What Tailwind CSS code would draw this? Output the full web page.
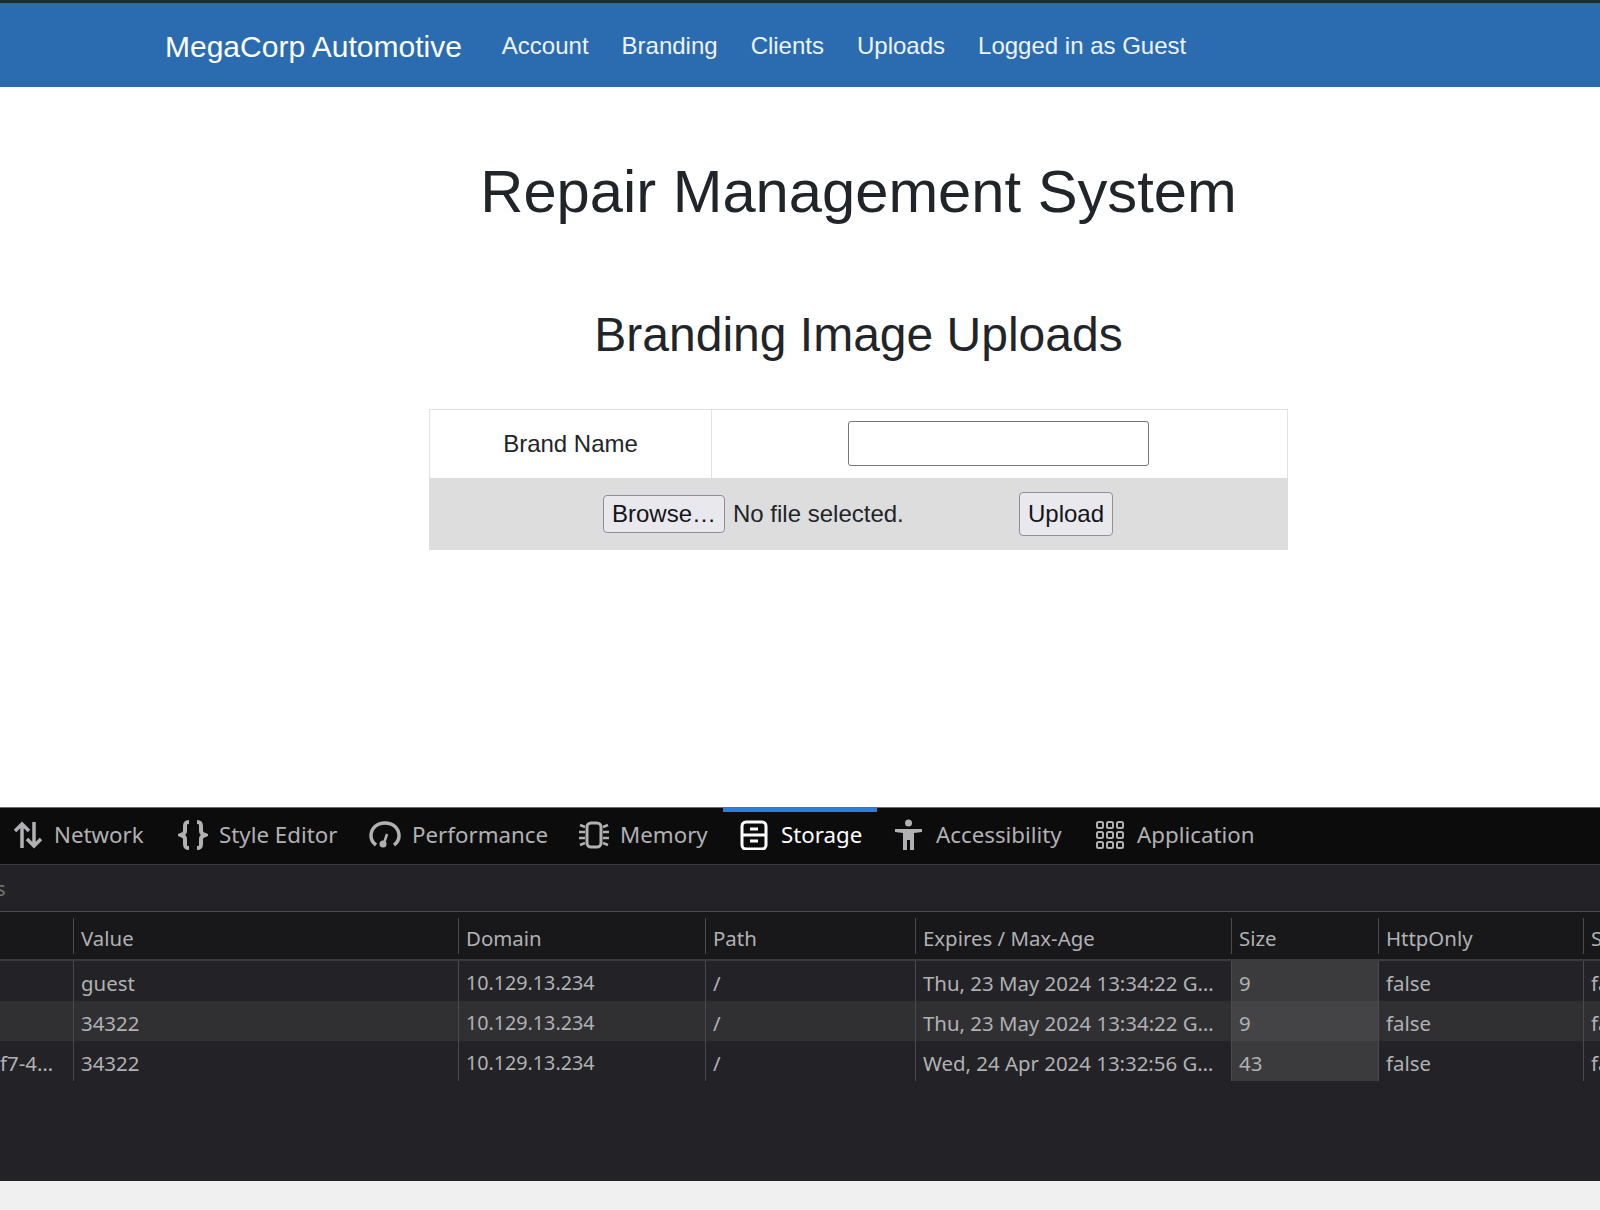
<!DOCTYPE html>
<html lang="en">
<head>
    <meta charset="UTF-8">
    <meta name="viewport" content="width=device-width, initial-scale=1.0">
    <title>Repair Management System</title>
    <script src="https://cdn.jsdelivr.net/npm/@tailwindcss/browser@4"></script>
</head>
<body class="bg-white h-[1210px] overflow-hidden flex flex-col font-['Liberation_Sans',Arial,sans-serif] text-[#212529]">
    <!-- site nav -->
    <nav class="h-[87px] shrink-0 border-t-[3px] border-[#1f2a2e] bg-[#2b6cb0] text-white flex items-center pl-[165px] pt-[2px]">
        <a class="text-[30px] mr-[40px]">MegaCorp Automotive</a>
        <div class="flex gap-[33px] text-[24px] text-[#eef3f9]">
            <a>Account</a>
            <a>Branding</a>
            <a>Clients</a>
            <a>Uploads</a>
            <a>Logged in as Guest</a>
        </div>
    </nav>

    <main class="h-[720px] shrink-0 flex flex-col items-center pl-[117px]">
        <h1 class="text-[59.7px] leading-[72px] mt-[69px]">Repair Management System</h1>
        <h2 class="text-[48px] leading-[56px] mt-[79px]">Branding Image Uploads</h2>
        <div class="w-[859px] mt-[46px] text-[24px]">
            <div class="h-[69px] flex border border-b-0 border-[#dee2e6]">
                <div class="w-[282px] border-r border-[#dee2e6] flex items-center justify-center">Brand Name</div>
                <div class="flex-1 flex items-center pl-[136px] pb-px">
                    <input type="text" class="w-[301px] h-[45px] bg-white border border-[#767676] rounded-[3px]">
                </div>
            </div>
            <div class="h-[72px] bg-[#dddddd] flex items-center pl-[174px]">
                <button class="w-[122px] h-[38px] bg-[#e9e9ed] border border-[#8f8f9d] rounded-[4px] text-[#15141a]">Browse…</button>
                <span class="ml-[8px] w-[286px]">No file selected.</span>
                <button class="w-[94px] h-[44px] bg-[#e9e9ed] border border-[#8f8f9d] rounded-[4px] text-[#15141a]">Upload</button>
            </div>
        </div>
    </main>

    <!-- devtools -->
    <section class="flex-1 flex flex-col bg-[#232327] border-t border-[#6b6b70] font-['Noto_Sans',sans-serif] text-[#b1b1b3] overflow-hidden">
        <div class="h-[57px] shrink-0 bg-[#0c0c0d] border-b border-[#38383d] flex text-[22.3px]">
            <div class="flex items-center gap-[11px] pl-[13px] w-[178px] pb-[2px]">
                <svg class="w-[30px] h-[30px]" viewBox="0 0 30 30" fill="none" stroke="#b1b1b3" stroke-width="3.5"><path d="M9 28V4M2 11l7-7 7 7M21 2v24M14 19l7 7 7-7"/></svg>
                <span>Network</span>
            </div>
            <div class="flex items-center gap-[11px] w-[191px] pb-[2px]">
                <svg class="w-[30px] h-[30px]" viewBox="0 0 30 30" fill="none" stroke="#b1b1b3" stroke-width="4"><path d="M11 2c-3 0-4 1-4 4v5c0 2-1 3-4 4 3 1 4 2 4 4v5c0 3 1 4 4 4M19 2c3 0 4 1 4 4v5c0 2 1 3 4 4-3 1-4 2-4 4v5c0 3-1 4-4 4"/></svg>
                <span>Style Editor</span>
            </div>
            <div class="flex items-center gap-[11px] w-[209px] pb-[2px]">
                <svg class="w-[32px] h-[30px]" viewBox="0 0 32 30" fill="none" stroke="#b1b1b3" stroke-width="3.5"><path d="M7 25C3 22 2 19 2 16 2 8 8 3 16 3s14 5 14 13c0 3-1 6-5 9"/><path d="M18 14l-3 9" stroke-width="2.5"/><circle cx="14" cy="24" r="3.5" fill="#b1b1b3" stroke="none"/></svg>
                <span>Performance</span>
            </div>
            <div class="flex items-center gap-[10px] w-[145px] pb-[2px]">
                <svg class="w-[32px] h-[30px]" viewBox="0 0 32 30" fill="none" stroke="#b1b1b3" stroke-width="3"><rect x="9" y="3" width="14" height="24" rx="4"/><path d="M7 7L2 5M7 12H1M7 18H1M7 23l-5 2M25 7l5-2M25 12h6M25 18h6M25 23l5 2" stroke-width="2.5"/></svg>
                <span>Memory</span>
            </div>
            <div class="flex items-center gap-[13px] w-[154px] pl-[17px] border-t-4 border-[#2a7fdc] text-white pb-[6px]">
                <svg class="w-[28px] h-[30px]" viewBox="0 0 28 30" fill="none" stroke="#ffffff" stroke-width="3"><rect x="2" y="2" width="24" height="27" rx="4"/><path d="M2 15h24M10 9h8M10 21h8"/></svg>
                <span>Storage</span>
            </div>
            <div class="flex items-center gap-[14px] w-[219px] pl-[18px] pb-[2px]">
                <svg class="w-[27px] h-[32px]" viewBox="0 0 27 32" fill="#b1b1b3"><circle cx="13.5" cy="4" r="3.5"/><path d="M0 10h27v3l-8 1v17h-4V21h-3v10H8V14l-8-1z"/></svg>
                <span>Accessibility</span>
            </div>
            <div class="flex items-center gap-[13px] pb-[2px]">
                <svg class="w-[28px] h-[28px]" viewBox="0 0 28 28" fill="none" stroke="#b1b1b3" stroke-width="2"><rect x="1" y="1" width="6" height="6" rx="1.5"/><rect x="11" y="1" width="6" height="6" rx="1.5"/><rect x="21" y="1" width="6" height="6" rx="1.5"/><rect x="1" y="11" width="6" height="6" rx="1.5"/><rect x="11" y="11" width="6" height="6" rx="1.5"/><rect x="21" y="11" width="6" height="6" rx="1.5"/><rect x="1" y="21" width="6" height="6" rx="1.5"/><rect x="11" y="21" width="6" height="6" rx="1.5"/><rect x="21" y="21" width="6" height="6" rx="1.5"/></svg>
                <span>Application</span>
            </div>
        </div>

        <div class="h-[47px] shrink-0 border-b border-[#4a4a4f] flex items-center text-[20px] text-[#737373] overflow-hidden pt-[2px]"><span class="ml-[-4px]">s</span></div>

        <div class="text-[20.4px] leading-[44px]">
            <div class="h-[49px] grid grid-cols-[73px_385px_247px_210px_316px_147px_205px_17px] items-center bg-[#18181b] border-b-2 border-[#3a3a3f] overflow-hidden">
                <div></div>
                <div class="h-[36px] leading-[40px] border-l border-[#4a4a4f] pl-[7px]">Value</div>
                <div class="h-[36px] leading-[40px] border-l border-[#4a4a4f] pl-[7px]">Domain</div>
                <div class="h-[36px] leading-[40px] border-l border-[#4a4a4f] pl-[7px]">Path</div>
                <div class="h-[36px] leading-[40px] border-l border-[#4a4a4f] pl-[7px]">Expires / Max-Age</div>
                <div class="h-[36px] leading-[40px] border-l border-[#4a4a4f] pl-[7px]">Size</div>
                <div class="h-[36px] leading-[40px] border-l border-[#4a4a4f] pl-[7px]">HttpOnly</div>
                <div class="h-[36px] leading-[40px] border-l border-[#4a4a4f] pl-[7px]">S</div>
            </div>
            <div class="h-[40px] grid grid-cols-[73px_385px_247px_210px_316px_147px_205px_17px] overflow-hidden">
                <div></div>
                <div class="border-l border-[#4a4a4f] pl-[7px]">guest</div>
                <div class="border-l border-[#4a4a4f] pl-[7px] text-[19.7px]">10.129.13.234</div>
                <div class="border-l border-[#4a4a4f] pl-[7px]">/</div>
                <div class="border-l border-[#4a4a4f] pl-[7px] whitespace-nowrap">Thu, 23 May 2024 13:34:22 G…</div>
                <div class="border-l border-[#4a4a4f] pl-[7px] bg-[#3b3b3e]">9</div>
                <div class="border-l border-[#4a4a4f] pl-[7px]">false</div>
                <div class="border-l border-[#4a4a4f] pl-[7px]">false</div>
            </div>
            <div class="h-[40px] grid grid-cols-[73px_385px_247px_210px_316px_147px_205px_17px] bg-[#303033] overflow-hidden">
                <div></div>
                <div class="border-l border-[#4a4a4f] pl-[7px]">34322</div>
                <div class="border-l border-[#4a4a4f] pl-[7px] text-[19.7px]">10.129.13.234</div>
                <div class="border-l border-[#4a4a4f] pl-[7px]">/</div>
                <div class="border-l border-[#4a4a4f] pl-[7px] whitespace-nowrap">Thu, 23 May 2024 13:34:22 G…</div>
                <div class="border-l border-[#4a4a4f] pl-[7px] bg-[#444447]">9</div>
                <div class="border-l border-[#4a4a4f] pl-[7px]">false</div>
                <div class="border-l border-[#4a4a4f] pl-[7px]">false</div>
            </div>
            <div class="h-[40px] grid grid-cols-[73px_385px_247px_210px_316px_147px_205px_17px] overflow-hidden">
                <div class="whitespace-nowrap">f7-4…</div>
                <div class="border-l border-[#4a4a4f] pl-[7px]">34322</div>
                <div class="border-l border-[#4a4a4f] pl-[7px] text-[19.7px]">10.129.13.234</div>
                <div class="border-l border-[#4a4a4f] pl-[7px]">/</div>
                <div class="border-l border-[#4a4a4f] pl-[7px] whitespace-nowrap">Wed, 24 Apr 2024 13:32:56 G…</div>
                <div class="border-l border-[#4a4a4f] pl-[7px] bg-[#3b3b3e]">43</div>
                <div class="border-l border-[#4a4a4f] pl-[7px]">false</div>
                <div class="border-l border-[#4a4a4f] pl-[7px]">false</div>
            </div>
        </div>
    </section>

    <footer class="h-[29px] shrink-0 bg-[#f0f0f0]"></footer>
</body>
</html>
